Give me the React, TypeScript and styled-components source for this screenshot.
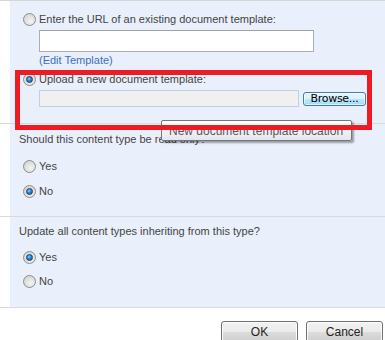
import React from 'react';
import styled, { createGlobalStyle } from 'styled-components';

const Global = createGlobalStyle`
    html, body {
        margin: 0;
        padding: 0;
        background: #ffffff;
    }
    body {
        font-family: 'Liberation Sans', Arial, sans-serif;
        font-size: 11px;
        color: #444444;
    }
`;

const App = () => {
    return (
        <Page>
            <Global />
            <Section>
                <Gutter />
                <Panel $pad={10} $height={122}>
                    <RadioRow>
                        <Radio />
                        <Label>Enter the URL of an existing document template:</Label>
                    </RadioRow>
                    <Indent>
                        <UrlInput />
                        <EditLink>(Edit Template)</EditLink>
                    </Indent>
                    <RadioRow $top={4}>
                        <Radio $checked />
                        <Label>Upload a new document template:</Label>
                    </RadioRow>
                    <Indent>
                        <UploadRow>
                            <FileInput />
                            <BrowseButton>Browse...</BrowseButton>
                        </UploadRow>
                    </Indent>
                </Panel>
            </Section>
            <Section>
                <Gutter />
                <Panel $pad={7} $height={92}>
                    <Question>Should this content type be read only?</Question>
                    <RadioRow $top={11}>
                        <Radio />
                        <Label>Yes</Label>
                    </RadioRow>
                    <RadioRow $top={9}>
                        <Radio $checked />
                        <Label>No</Label>
                    </RadioRow>
                </Panel>
            </Section>
            <Section>
                <Gutter />
                <Panel $pad={6} $height={90}>
                    <Question>Update all content types inheriting from this type?</Question>
                    <RadioRow $top={10}>
                        <Radio $checked />
                        <Label>Yes</Label>
                    </RadioRow>
                    <RadioRow $top={8}>
                        <Radio />
                        <Label>No</Label>
                    </RadioRow>
                </Panel>
            </Section>
            <Footer>
                <DialogButton>OK</DialogButton>
                <DialogButton>Cancel</DialogButton>
            </Footer>
            <Tooltip>New document template location</Tooltip>
            <Highlight />
        </Page>
    );
};

const Page = styled.div`
    position: relative;
    width: 385px;
    height: 340px;
    overflow: hidden;
    border-top: 1px solid #d6d6d6;
    box-sizing: border-box;
`;

const Section = styled.div`
    display: flex;
    border-bottom: 1px solid #d9d9d9;
`;

const Gutter = styled.div`
    width: 10px;
    flex: none;
    background: #ffffff;
`;

const Panel = styled.div<{ $pad: number; $height: number }>`
    flex: 1;
    display: flex;
    flex-direction: column;
    box-sizing: border-box;
    height: ${(p) => p.$height}px;
    background: #e9f0fb;
    padding: ${(p) => p.$pad}px 0 0 13px;
`;

const RadioRow = styled.div<{ $top?: number }>`
    display: flex;
    align-items: center;
    height: 16px;
    margin-top: ${(p) => p.$top ?? 0}px;
`;

const Radio = styled.span<{ $checked?: boolean }>`
    position: relative;
    width: 11px;
    height: 11px;
    border-radius: 50%;
    border: 1px solid #8b8d8e;
    background: radial-gradient(circle at 60% 65%, #f4f4f4 0%, #dcdcdc 60%, #cfcfcf 100%);
    flex: none;
    margin-right: 3px;
    &::after {
        content: '';
        display: ${(p) => (p.$checked ? 'block' : 'none')};
        position: absolute;
        left: 2px;
        top: 2px;
        width: 5px;
        height: 5px;
        border-radius: 50%;
        border: 1px solid #1b3f63;
        background: radial-gradient(circle at 40% 35%, #7fd0ff 0%, #2a8ad6 45%, #0d4f8e 100%);
    }
`;

const Label = styled.span`
    color: #444444;
    line-height: 16px;
    white-space: nowrap;
`;

const Indent = styled.div`
    display: flex;
    flex-direction: column;
    padding-left: 16px;
`;

const UrlInput = styled.div`
    width: 275px;
    height: 22px;
    margin-top: 3px;
    box-sizing: border-box;
    background: #ffffff;
    border: 1px solid #abadb3;
    border-top-color: #a0a2a8;
`;

const EditLink = styled.span`
    color: #3c6fc2;
    line-height: 14px;
    margin-top: 1px;
`;

const UploadRow = styled.div`
    display: flex;
    align-items: center;
    margin-top: 3px;
    gap: 4px;
`;

const FileInput = styled.div`
    width: 260px;
    height: 17px;
    box-sizing: border-box;
    background: #f0f0f0;
    border: 1px solid #b9d2e8;
`;

const BrowseButton = styled.div`
    width: 63px;
    height: 14px;
    box-sizing: border-box;
    display: flex;
    align-items: center;
    justify-content: center;
    border: 1px solid #3c7fb1;
    border-radius: 3px;
    background: linear-gradient(#eaf6fd 0%, #d9f0fc 50%, #bee6fd 51%, #a7d9f5 100%);
    box-shadow: inset 0 0 0 1px rgba(255, 255, 255, 0.6);
    color: #000000;
    font-family: 'DejaVu Sans', 'Liberation Sans', sans-serif;
    font-size: 11px;
    letter-spacing: -0.3px;
`;

const Question = styled.div`
    color: #444444;
    line-height: 16px;
    margin-left: -4px;
`;

const Footer = styled.div`
    display: flex;
    justify-content: flex-end;
    gap: 8px;
    padding: 13px 2px 0 0;
`;

const DialogButton = styled.div`
    width: 77px;
    height: 21px;
    box-sizing: border-box;
    display: flex;
    align-items: center;
    justify-content: center;
    border: 1px solid #707070;
    border-radius: 3px;
    background: linear-gradient(#f2f2f2 0%, #ebebeb 50%, #dddddd 51%, #cfcfcf 100%);
    box-shadow: inset 0 0 0 1px #fcfcfc;
    color: #222222;
    font-size: 12px;
`;

const Tooltip = styled.div`
    position: absolute;
    left: 161px;
    top: 119px;
    width: 191px;
    height: 21px;
    box-sizing: border-box;
    padding: 3px 0 0 7px;
    border: 1px solid #767676;
    border-radius: 2px;
    background: linear-gradient(#ffffff, #e4e5f0);
    box-shadow: 2px 2px 2px rgba(0, 0, 0, 0.35);
    color: #575757;
    font-size: 12px;
    white-space: nowrap;
    z-index: 1;
`;

const Highlight = styled.div`
    position: absolute;
    left: 15px;
    top: 69px;
    width: 357px;
    height: 60px;
    box-sizing: border-box;
    border: 5px solid #ed1c24;
    pointer-events: none;
    z-index: 2;
`;

export default App;
